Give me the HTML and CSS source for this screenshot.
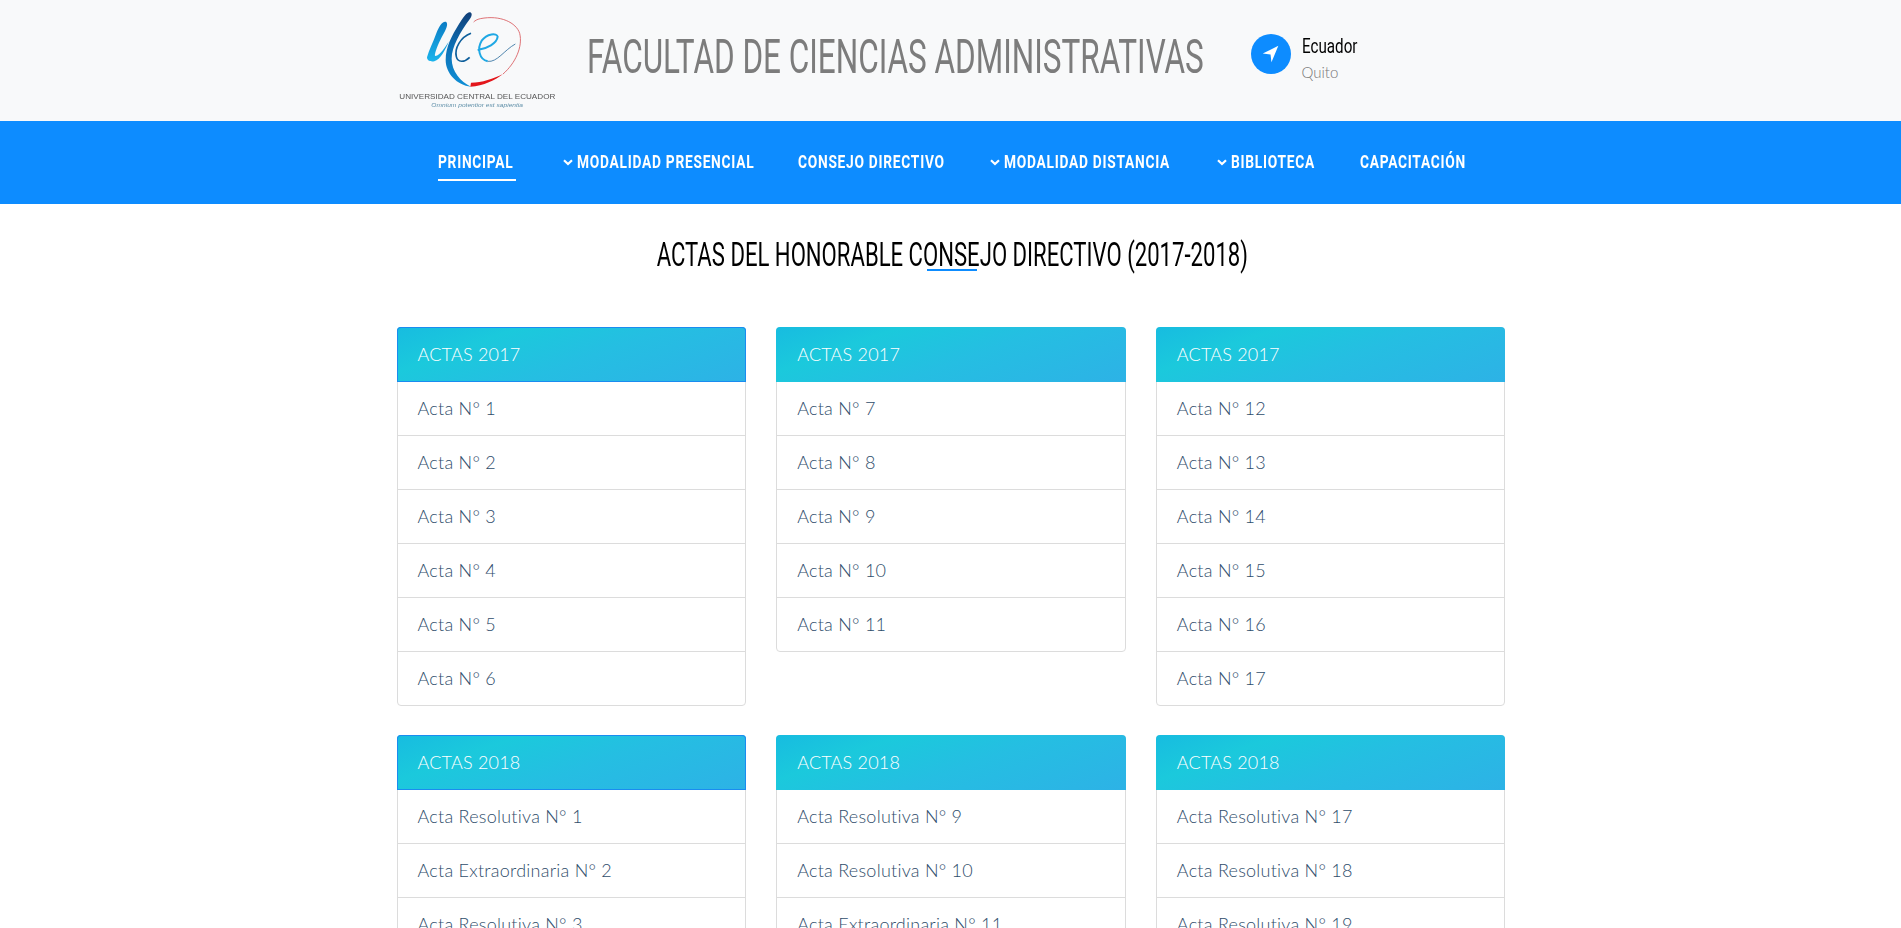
FILE: index.html
```html
<!DOCTYPE html>
<html>
<head>
    <meta charset="UTF-8">
    <title>Facultad de Ciencias Administrativas</title>
    <link rel="stylesheet" href="styles.css">
</head>
<body>
    <header class="top-bar">
        <div class="top-inner">
            <a class="logo" href="#">
                <svg class="logo-svg" viewBox="50 30 480 300" width="160" height="100">
                    <defs>
                        <linearGradient id="stemBlue" x1="0" y1="0" x2="0" y2="1">
                            <stop offset="0" stop-color="#0b7cc4"/>
                            <stop offset="1" stop-color="#1bb4ec"/>
                        </linearGradient>
                        <linearGradient id="longBlue" x1="0" y1="0" x2="0" y2="1">
                            <stop offset="0" stop-color="#123f78"/>
                            <stop offset="0.45" stop-color="#0c6fb4"/>
                            <stop offset="1" stop-color="#0f8fd6"/>
                        </linearGradient>
                    </defs>
                    <path d="M198 66 C186 62 176 80 168 100 C158 128 146 150 140 172 C140 182 150 186 162 184 C180 178 195 150 205 125 C195 140 180 165 165 168 C160 168 170 140 180 120 C192 96 206 76 198 66 Z" fill="url(#stemBlue)"/>
                    <path d="M272 38 C262 32 250 50 236 72 C214 108 196 140 196 180 C196 220 230 256 272 260 C240 244 214 214 214 176 C214 140 240 96 268 58 C274 50 276 42 272 38 Z" fill="url(#longBlue)"/>
                    <path d="M270 260 C310 258 345 240 368 222 C340 236 305 248 272 248 Z" fill="#e3161b"/>
                    <path d="M368 222 C405 190 428 140 418 100 C408 68 360 44 300 56 C290 58 284 62 280 66" fill="none" stroke="#d8585c" stroke-width="2.5"/>
                    <path d="M272 100 C240 112 222 145 228 170 C232 188 252 188 268 172" fill="none" stroke="#0e5f9c" stroke-width="5"/>
                    <path d="M292 150 C320 146 350 130 352 110 C350 98 320 100 304 122 C290 145 296 178 322 184" fill="none" stroke="#1fa8e4" stroke-width="6"/>
                    <path d="M322 184 C350 188 372 150 405 132" fill="none" stroke="#2f6f9f" stroke-width="2.5"/>
                    <text class="logo-name" x="57" y="296" textLength="468" lengthAdjust="spacingAndGlyphs">UNIVERSIDAD CENTRAL DEL ECUADOR</text>
                    <text class="logo-motto" x="153" y="320" textLength="275" lengthAdjust="spacingAndGlyphs">Omnium potentior est sapientia</text>
                </svg>
            </a>
            <div class="site-name"><span>FACULTAD DE CIENCIAS ADMINISTRATIVAS</span></div>
            <div class="place">
                <span class="place-icon">
                    <svg viewBox="0 0 24 24" width="22" height="22"><path d="M20 3 L3 11.5 L11.5 12.5 L12.5 21 Z" fill="#fff"/></svg>
                </span>
                <div>
                    <div class="place-country"><span>Ecuador</span></div>
                    <div class="place-city">Quito</div>
                </div>
            </div>
        </div>
    </header>

    <nav class="main-nav">
        <ul class="nav-list">
            <li class="nav-principal"><a class="active" href="#"><span class="nav-text">PRINCIPAL</span></a></li>
            <li class="nav-presencial"><a href="#"><svg class="chev" viewBox="0 0 10 7" width="10" height="7"><path d="M1 1.2 L5 5 L9 1.2" fill="none" stroke="#fff" stroke-width="2.2"/></svg><span class="nav-text">MODALIDAD PRESENCIAL</span></a></li>
            <li class="nav-consejo"><a href="#"><span class="nav-text">CONSEJO DIRECTIVO</span></a></li>
            <li class="nav-distancia"><a href="#"><svg class="chev" viewBox="0 0 10 7" width="10" height="7"><path d="M1 1.2 L5 5 L9 1.2" fill="none" stroke="#fff" stroke-width="2.2"/></svg><span class="nav-text">MODALIDAD DISTANCIA</span></a></li>
            <li class="nav-biblioteca"><a href="#"><svg class="chev" viewBox="0 0 10 7" width="10" height="7"><path d="M1 1.2 L5 5 L9 1.2" fill="none" stroke="#fff" stroke-width="2.2"/></svg><span class="nav-text">BIBLIOTECA</span></a></li>
            <li class="nav-capacitacion"><a href="#"><span class="nav-text">CAPACITACIÓN</span></a></li>
        </ul>
    </nav>

    <main class="content">
        <h2 class="page-title"><span>ACTAS DEL HONORABLE CONSEJO DIRECTIVO (2017-2018)</span></h2>

        <div class="card-grid">
            <section class="card">
                <h3 class="card-head first">ACTAS 2017</h3>
                <a href="#">Acta N° 1</a>
                <a href="#">Acta N° 2</a>
                <a href="#">Acta N° 3</a>
                <a href="#">Acta N° 4</a>
                <a href="#">Acta N° 5</a>
                <a href="#">Acta N° 6</a>
            </section>
            <section class="card">
                <h3 class="card-head">ACTAS 2017</h3>
                <a href="#">Acta N° 7</a>
                <a href="#">Acta N° 8</a>
                <a href="#">Acta N° 9</a>
                <a href="#">Acta N° 10</a>
                <a href="#">Acta N° 11</a>
            </section>
            <section class="card">
                <h3 class="card-head">ACTAS 2017</h3>
                <a href="#">Acta N° 12</a>
                <a href="#">Acta N° 13</a>
                <a href="#">Acta N° 14</a>
                <a href="#">Acta N° 15</a>
                <a href="#">Acta N° 16</a>
                <a href="#">Acta N° 17</a>
            </section>
            <section class="card">
                <h3 class="card-head first">ACTAS 2018</h3>
                <a href="#">Acta Resolutiva N° 1</a>
                <a href="#">Acta Extraordinaria N° 2</a>
                <a href="#">Acta Resolutiva N° 3</a>
            </section>
            <section class="card">
                <h3 class="card-head">ACTAS 2018</h3>
                <a href="#">Acta Resolutiva N° 9</a>
                <a href="#">Acta Resolutiva N° 10</a>
                <a href="#">Acta Extraordinaria N° 11</a>
            </section>
            <section class="card">
                <h3 class="card-head">ACTAS 2018</h3>
                <a href="#">Acta Resolutiva N° 17</a>
                <a href="#">Acta Resolutiva N° 18</a>
                <a href="#">Acta Resolutiva N° 19</a>
            </section>
        </div>
    </main>
</body>
</html>
```

FILE: styles.css
```css
html, body {
    height: 928px;
    overflow: hidden;
}

body {
    margin: 0;
    background: #fff;
    font-family: "Lato", "Open Sans", sans-serif;
    font-weight: 300;
}

a {
    text-decoration: none;
}

/* top bar */
.top-bar {
    height: 121px;
    background: #f8f9fa;
}

.top-inner {
    width: 1108px;
    height: 121px;
    margin: 0 auto;
    display: flex;
}

.logo {
    flex: none;
    width: 190px;
    padding-top: 10px;
}

.logo-svg {
    display: block;
    filter: blur(0.3px);
}

.logo-name {
    font-family: "Liberation Sans", sans-serif;
    font-size: 21px;
    fill: #555;
}

.logo-motto {
    font-family: "Liberation Sans", sans-serif;
    font-size: 15px;
    font-style: italic;
    fill: #5f8fa8;
}

.site-name {
    flex: none;
    width: 617px;
    height: 54px;
    margin: 30px 47px 0 0;
    font-family: "Roboto", sans-serif;
    font-size: 48px;
    font-weight: 400;
    line-height: 54px;
    color: #7c7c7c;
    white-space: nowrap;
}

.site-name span {
    display: inline-block;
    transform: scaleX(0.656);
    transform-origin: 0 50%;
}

.place {
    display: flex;
    gap: 11px;
    margin-top: 34px;
}

.place-icon {
    width: 40px;
    height: 40px;
    border-radius: 50%;
    background: #0d8cff;
    display: flex;
    align-items: center;
    justify-content: center;
}

.place-country {
    font-family: "Roboto", sans-serif;
    font-size: 20px;
    font-weight: 400;
    line-height: 24px;
    color: #000;
    white-space: nowrap;
}

.place-country span {
    display: inline-block;
    transform: scaleX(0.76);
    transform-origin: 0 50%;
}

.place-city {
    margin-top: 4px;
    font-size: 15px;
    line-height: 20px;
    color: #777;
}

/* nav */
.main-nav {
    height: 83px;
    background: #0d8cff;
}

.nav-list {
    list-style: none;
    box-sizing: border-box;
    width: 1108px;
    height: 83px;
    margin: 0 auto;
    padding: 29px 0 0 41px;
    display: flex;
    gap: 45px;
}

.nav-list li {
    flex: none;
}

.nav-list a {
    display: flex;
    justify-content: flex-end;
    align-items: center;
    box-sizing: border-box;
    height: 31px;
    padding-bottom: 5px;
    border-bottom: 2px solid transparent;
    color: #fff;
}

.nav-list a.active {
    border-bottom-color: #fff;
}

.nav-text {
    display: block;
    flex: none;
    font-family: "Roboto", sans-serif;
    font-size: 19px;
    font-weight: 700;
    letter-spacing: 1px;
    line-height: 24px;
    white-space: nowrap;
    transform: scaleX(0.725);
    transform-origin: 0 50%;
}

.chev {
    flex: none;
    margin-right: 4px;
}

.nav-principal { width: 78px; }
.nav-principal .nav-text { width: 78px; }
.nav-presencial { width: 192px; }
.nav-presencial .nav-text { width: 176px; }
.nav-consejo { width: 143px; }
.nav-consejo .nav-text { width: 143px; }
.nav-distancia { width: 183px; }
.nav-distancia .nav-text { width: 165px; }
.nav-biblioteca { width: 101px; }
.nav-biblioteca .nav-text { width: 84px; }
.nav-capacitacion { width: 105px; }
.nav-capacitacion .nav-text { width: 105px; }

/* content */
.content {
    width: 1108px;
    margin: 0 auto;
}

.page-title {
    position: relative;
    box-sizing: border-box;
    height: 123px;
    margin: 0;
    padding: 31px 0 0 3px;
    text-align: center;
    font-family: "Roboto", sans-serif;
    font-size: 33px;
    font-weight: 400;
    line-height: 40px;
    color: #000;
    white-space: nowrap;
}

.page-title span {
    display: inline-block;
    transform: scaleX(0.67);
}

.page-title::after {
    content: "";
    position: absolute;
    left: 530px;
    top: 65px;
    width: 50px;
    height: 2px;
    background: #0d8cff;
}

.card-grid {
    width: 1109px;
    display: grid;
    grid-template-columns: repeat(3, 1fr);
    column-gap: 30px;
    row-gap: 29px;
    align-items: start;
}

.card {
    border: 1px solid #dcdcdc;
    border-radius: 4px;
    background: #fff;
}

.card-head {
    box-sizing: border-box;
    height: 55px;
    margin: -1px -1px 0;
    padding: 0 21px;
    border-radius: 4px 4px 0 0;
    font-size: 18px;
    font-weight: 300;
    letter-spacing: 0.2px;
    line-height: 55px;
    color: #fff;
    background: linear-gradient(160deg, #17bce0 0%, #1bc9dc 25%, #25bee2 55%, #2db2e6 100%);
}

.card-head.first {
    box-shadow: inset 0 0 0 1px #1a8cf0;
}

.card a {
    display: block;
    height: 53px;
    padding: 0 20px;
    font-size: 18px;
    letter-spacing: 0.25px;
    line-height: 53px;
    color: #2f4d6b;
}

.card a + a {
    border-top: 1px solid #dcdcdc;
}
```
